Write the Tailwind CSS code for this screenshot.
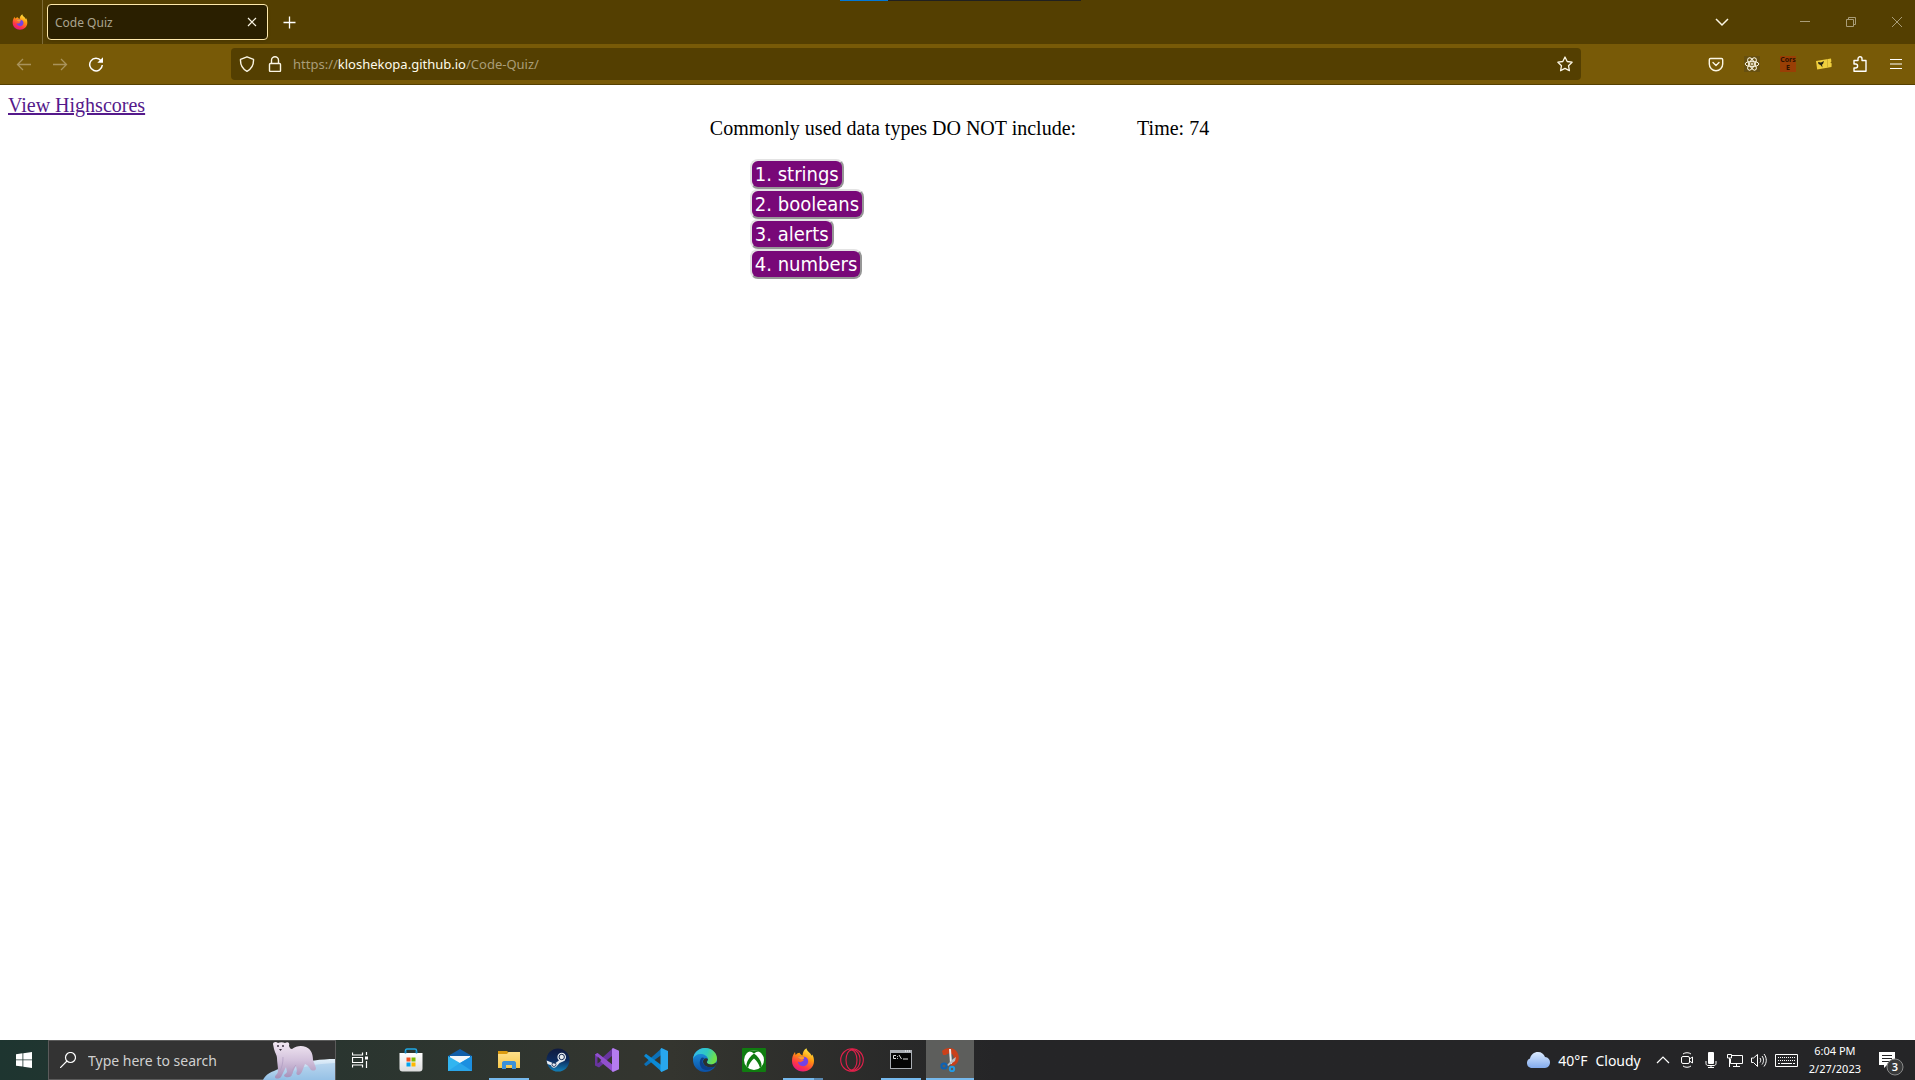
<!DOCTYPE html>
<html lang="en">
<head>
<meta charset="utf-8">
<title>Code Quiz</title>
<script src="https://cdn.jsdelivr.net/npm/@tailwindcss/browser@4"></script>
</head>
<body class="flex h-screen flex-col overflow-hidden bg-white font-['Noto_Sans',sans-serif]">
<svg class="absolute size-0" aria-hidden="true">
  <defs>
    <linearGradient id="fx" x1=".8" y1="0" x2=".3" y2="1"><stop offset="0" stop-color="#fff44f"/><stop offset=".4" stop-color="#ff980e"/><stop offset=".75" stop-color="#ff3647"/><stop offset="1" stop-color="#e31587"/></linearGradient>
    <linearGradient id="edge" x1="0" y1="0" x2="1" y2=".3"><stop offset="0" stop-color="#35b8f1"/><stop offset=".6" stop-color="#2fc9c0"/><stop offset="1" stop-color="#6fe04b"/></linearGradient>
    <linearGradient id="edge2" x1="0" y1="0" x2="0" y2="1"><stop offset="0" stop-color="#1e9be8"/><stop offset="1" stop-color="#0b50a4"/></linearGradient>
    <linearGradient id="steam" x1="0" y1="0" x2="0" y2="1"><stop offset="0" stop-color="#101a3e"/><stop offset=".5" stop-color="#0d2a5c"/><stop offset="1" stop-color="#1280b8"/></linearGradient>
    <linearGradient id="cloud" x1="0" y1="0" x2="0" y2="1"><stop offset="0" stop-color="#dcebff"/><stop offset="1" stop-color="#82aaec"/></linearGradient>
    <linearGradient id="bear" x1="0" y1="0" x2="0" y2="1"><stop offset="0" stop-color="#f3e9f3"/><stop offset=".5" stop-color="#d3c2dc"/><stop offset="1" stop-color="#a58fb8"/></linearGradient>
    <linearGradient id="ice" x1="0" y1="0" x2="0" y2="1"><stop offset="0" stop-color="#e4f0fa"/><stop offset="1" stop-color="#8fbde4"/></linearGradient>
    <linearGradient id="bag" x1="0" y1="0" x2="0" y2="1"><stop offset="0" stop-color="#ffffff"/><stop offset="1" stop-color="#dcdcdc"/></linearGradient>
    <linearGradient id="folder" x1="0" y1="0" x2="0" y2="1"><stop offset="0" stop-color="#ffe08a"/><stop offset="1" stop-color="#f8c84a"/></linearGradient>
    <symbol id="firefox" viewBox="0 0 24 24">
      <path d="M1 13C1 9 2 6.500 4 4l.6 3C6 5.500 7 5 8.500 4.800 9 6 10 7 11.500 7.400c.3-3 1.300-5.500 4-7.100.2 2.700 2.500 3.600 4 5.500.5.700.8 1.300 1 2l.7-1.300C22.500 8.500 23 10.500 23 13c0 6-5 10.500-11 10.500S1 19 1 13z" fill="url(#fx)"/>
      <path d="M7 9.500c2-2 4-1 6-.8 3 .4 4.500 2.500 4.200 5-.4 3-2.700 4.600-5.300 4.500C9 18 7 16 6.800 13.500c1.200 1 2.500 1 3.700.2l2.200-1.200c-.4-1-1.500-1.200-2.700-1.200-1 0-2-.8-3-1.800z" fill="#7542e5"/>
      <path d="M7 9.500c1.500-1.500 3.500-1.300 5-.9 1.300.4 1.600 1.800.7 2.400-1 .6-2.300.4-3 .2-1.100-.3-2-1-2.700-1.700z" fill="#ff9a2a"/>
    </symbol>
  </defs>
</svg>

<header class="shrink-0">
  <div class="relative flex h-11 items-center bg-[#543f01] pr-[10px]">
    <div class="absolute left-[840px] top-0 flex h-px w-[241px] bg-[#202020]"><div class="w-12 bg-[#0078d7]"></div></div>
    <div class="flex h-11 w-[43px] items-center border-r border-[#7e6c38] pl-3"><svg class="size-4"><use href="#firefox"/></svg></div>
    <div class="ml-1 flex h-9 w-[221px] items-center justify-between rounded border border-[#ffe9ab] bg-[#2a1f00] pl-[7px] pr-[7px] shadow">
      <span class="pt-px text-xs text-[#aaa48f]">Code Quiz</span>
      <button aria-label="Close tab" class="text-[#fbf6e4]"><svg class="size-4" viewBox="0 0 16 16" fill="none" stroke="currentColor" stroke-width="1.200"><path d="M4 4l8 8M12 4l-8 8"/></svg></button>
    </div>
    <button aria-label="New tab" class="ml-[13px] text-white"><svg class="size-4" viewBox="0 0 16 16" fill="none" stroke="currentColor" stroke-width="1.300"><path d="M8.500 2.500v12M2.500 8.500h12"/></svg></button>
    <button aria-label="List all tabs" class="ml-auto mr-[67px] text-[#fbf6e4]"><svg class="size-4" viewBox="0 0 16 16" fill="none" stroke="currentColor" stroke-width="1.500"><path d="M2 5l6 6 6-6"/></svg></button>
    <div class="flex gap-[30px] text-[#a99d78]">
      <button aria-label="Minimize"><svg class="size-4" viewBox="0 0 16 16" fill="none" stroke="currentColor"><path d="M3 7.500h10"/></svg></button>
      <button aria-label="Restore"><svg class="size-4" viewBox="0 0 16 16" fill="none" stroke="currentColor"><path d="M3.500 5.500h7v7h-7zM5.500 5.500v-2h7v7h-2"/></svg></button>
      <button aria-label="Close"><svg class="size-4" viewBox="0 0 16 16" fill="none" stroke="currentColor"><path d="M3 3l10 10M13 3L3 13"/></svg></button>
    </div>
  </div>

  <div class="flex h-[41px] items-center border-b border-[#543f01] bg-[#785a07] pl-[6px] pr-px text-[#fbf6e4]">
    <button aria-label="Back" class="flex w-9 justify-center text-[#a9935b]"><svg class="size-4" viewBox="0 0 16 16" fill="none" stroke="currentColor" stroke-width="1.300"><path d="M15 8.500H1.500M7 3L1.500 8.500 7 14"/></svg></button>
    <button aria-label="Forward" class="flex w-9 justify-center text-[#a9935b]"><svg class="size-4" viewBox="0 0 16 16" fill="none" stroke="currentColor" stroke-width="1.300"><path d="M1 8.500h13.500M9 3l5.500 5.500L9 14"/></svg></button>
    <button aria-label="Reload" class="flex w-9 justify-center text-white"><svg class="size-4" viewBox="0 0 16 16" fill="none" stroke="currentColor" stroke-width="1.500"><path d="M13 4.700A6.300 6.300 0 1 0 14.300 9"/><path d="M15 1.200v5.600H9.300z" fill="currentColor" stroke="none"/></svg></button>
    <div class="mx-[117px] flex h-8 flex-1 items-center rounded bg-[#543f01] px-2">
      <svg class="size-4" viewBox="0 0 16 16" fill="none" stroke="currentColor" stroke-width="1.400" stroke-linejoin="round"><path d="M8 .8L14.500 3.300C14.800 9 12.500 13 8 15.300 3.500 13 1.200 9 1.500 3.300z"/></svg>
      <svg class="ml-3 size-4" viewBox="0 0 16 16" fill="none" stroke="currentColor" stroke-width="1.400"><rect x="2.500" y="7.500" width="11" height="8" rx="1"/><path d="M4.500 7.500V4.200a3.500 3.500 0 0 1 7 0v3.300"/></svg>
      <a href="https://kloshekopa.github.io/Code-Quiz/" class="ml-[10px] pt-0.5 text-[13px] text-[#a99d78]">https://<span class="text-[#fffbea]">kloshekopa.github.io</span>/Code-Quiz/</a>
      <button aria-label="Bookmark this page" class="ml-auto"><svg class="size-4" viewBox="0 0 16 16" fill="none" stroke="currentColor" stroke-width="1.300" stroke-linejoin="round"><path d="M8 1l2.200 4.500 4.900.7-3.600 3.500.9 5L8 12.400l-4.400 2.300.9-5L.9 6.200l4.900-.7z"/></svg></button>
    </div>
    <button aria-label="Pocket" class="flex w-9 justify-center"><svg class="size-4" viewBox="0 0 16 16" fill="none" stroke="currentColor" stroke-width="1.400" stroke-linecap="round" stroke-linejoin="round"><path d="M2.500 2.500h11c.7 0 1.200.5 1.200 1.200V8A6.700 6.700 0 0 1 1.300 8V3.700c0-.7.500-1.200 1.200-1.200z"/><path d="M5 6.500l3 3 3-3"/></svg></button>
    <button aria-label="React Developer Tools" class="flex w-9 justify-center"><svg class="size-4 bg-[#675010]" viewBox="0 0 16 16" fill="none" stroke="currentColor" stroke-width="1"><ellipse cx="8" cy="8" rx="6.800" ry="2.700"/><ellipse cx="8" cy="8" rx="6.800" ry="2.700" transform="rotate(60 8 8)"/><ellipse cx="8" cy="8" rx="6.800" ry="2.700" transform="rotate(120 8 8)"/><circle cx="8" cy="8" r="1"/></svg></button>
    <button aria-label="CORS Everywhere" class="flex w-9 justify-center"><span class="flex size-4 flex-col items-center bg-[#993f05] text-[7px] leading-[8px] font-bold text-[#2d1300]"><span>Cors</span><span>E</span></span></button>
    <button aria-label="Ticket extension" class="flex w-9 justify-center"><svg class="size-4" viewBox="0 0 16 16"><path d="M0 5l15-2.500.4 3-1 1 1.300 1-.2 3.500L1.200 13.500z" fill="#f0cf3e"/><path d="M2 6l3 .5L8 5 7 8l-1 .5.500 3L4.500 9 2.500 8z" fill="#272414"/><path d="M11.500 3.500v7.500" stroke="#b69521" stroke-dasharray="1"/></svg></button>
    <button aria-label="Extensions" class="flex w-9 justify-center text-white"><svg class="size-4" viewBox="0 0 16 16" fill="none" stroke="currentColor" stroke-width="1.400" stroke-linejoin="round"><path d="M2 7V4.500h4V2.800a2 2 0 0 1 4 0v1.700h4v10.800H2V12h1.600a2 2 0 0 0 0-4H2z"/></svg></button>
    <button aria-label="Open application menu" class="flex w-9 justify-center text-white"><svg class="size-4" viewBox="0 0 16 16" fill="none" stroke="currentColor" stroke-width="1.200"><path d="M2 3.500h12M2 8h12M2 12.500h12"/></svg></button>
  </div>
</header>

<main class="min-h-0 flex-1 px-2 pt-[9px] font-['Liberation_Serif',serif] text-xl leading-[23px] text-black">
  <a href="#highscores" class="block w-fit text-[#551a8b] underline">View Highscores</a>
  <div class="flex justify-center gap-[61px] pl-1">
    <section>
      <h1>Commonly used data types DO NOT include:</h1>
      <ol class="mt-[19px] flex flex-col items-start pl-10 font-['DejaVu_Sans_Condensed','DejaVu_Sans',sans-serif] text-xl leading-[26px] text-white">
        <li class="flex"><button class="rounded-lg border-2 border-t-[#e3e3e3] border-l-[#e3e3e3] border-r-[#979797] border-b-[#979797] bg-[#780878] px-[3px]">1. strings</button></li>
        <li class="flex"><button class="rounded-lg border-2 border-t-[#e3e3e3] border-l-[#e3e3e3] border-r-[#979797] border-b-[#979797] bg-[#780878] px-[3px]">2. booleans</button></li>
        <li class="flex"><button class="rounded-lg border-2 border-t-[#e3e3e3] border-l-[#e3e3e3] border-r-[#979797] border-b-[#979797] bg-[#780878] px-[3px]">3. alerts</button></li>
        <li class="flex"><button class="rounded-lg border-2 border-t-[#e3e3e3] border-l-[#e3e3e3] border-r-[#979797] border-b-[#979797] bg-[#780878] px-[3px]">4. numbers</button></li>
      </ol>
    </section>
    <p>Time: 74</p>
  </div>
</main>

<footer class="flex h-10 shrink-0 items-stretch bg-linear-to-r from-[#1e3530] via-[#34352f] via-35% to-[#252527] to-52% text-white">
  <button aria-label="Start" class="flex w-12 items-center justify-center"><svg class="size-4" viewBox="0 0 16 16" fill="currentColor"><path d="M0 2.200L6.500 1.300v6.200H0zM7.300 1.200L16 0v7.500H7.300zM0 8.300h6.500v6.300L0 13.700zM7.300 8.300H16V16l-8.700-1.300z"/></svg></button>
  <label class="relative flex w-[288px] items-center border border-[#5b5b5b] bg-[#333333] pl-[11px]">
    <svg class="size-4" viewBox="0 0 16 16" fill="none" stroke="currentColor" stroke-width="1.200"><circle cx="10.500" cy="5.500" r="5"/><path d="M7 9L0 16"/></svg>
    <input type="text" aria-label="Search" placeholder="Type here to search" class="ml-3 w-36 bg-transparent pt-0.5 text-sm text-white outline-none placeholder:text-[#d0d0d0]">
    <svg class="absolute -top-px right-0 h-10 w-[72px]" viewBox="0 0 72 40">
      <path d="M0 40C2 36 5 33 11 31c9-4 12-6 23-6 10-4 24-6 38-6v21z" fill="url(#ice)"/>
      <path d="M26 34c12-8 28-10 46-11v17H22z" fill="#9dc6e8" opacity=".5"/>
      <path d="M10 4c0-2 3-3 5-1 2-1 5-1 7 0 3-2 5 0 4 3 1 2 1 3 3 3 4-3 9-4 14-2 5 2 7 7 7 13l3 8c0 3-3 3-5 2-2-3-3-5-6-6l-2 5c-1 3-2 5-4 6-3 0-3-2-2-4l-1-5c-2 3-3 6-4 8 0 4-6 4-8 2 0-2 2-2 3-4l-1-5-5 10c-2 2-6 2-6 0s3-3 3-6c0-5-1-9-1-13 0-3-2-5-3-9z" fill="url(#bear)"/>
      <path d="M20 17c0 6-1 10-3 14M33 25c-2 2-4 5-4 9" stroke="#b3a0c4" stroke-width=".8" fill="none"/>
      <circle cx="15" cy="6" r="1" fill="#3b3040"/><circle cx="20" cy="6" r="1" fill="#3b3040"/><path d="M16 9h3l-1.500 2z" fill="#3b3040"/>
    </svg>
  </label>
  <nav aria-label="Taskbar" class="flex gap-px">
    <button aria-label="Task View" class="mr-0.5 flex w-12 items-center justify-center"><svg class="size-4" viewBox="0 0 16 16" fill="none" stroke="currentColor" stroke-width="1.200"><path d="M.5.5v2.500h10V.5M.5 15.500V13h10v2.500M.5 5.500h10v5H.5zM14.500 0v3M14.500 9v7"/><path d="M13 4.500h3v3h-3z" fill="currentColor" stroke="none"/></svg></button>
    <button aria-label="Microsoft Store" class="flex w-12 items-center justify-center"><svg class="size-6" viewBox="0 0 24 24"><path d="M6.500 6V2.500C6.500 1.600 7 1 8 1h8c1 0 1.500.6 1.500 1.500V6" fill="none" stroke="#1fa9e6" stroke-width="1.500"/><path d="M.5 5h23v15.500a3 3 0 0 1-3 3h-17a3 3 0 0 1-3-3z" fill="url(#bag)"/><path d="M7.500 9.500h4v4h-4z" fill="#f25022"/><path d="M12.500 9.500h4v4h-4z" fill="#7fba00"/><path d="M7.500 14.500h4v4h-4z" fill="#00a4ef"/><path d="M12.500 14.500h4v4h-4z" fill="#ffb900"/><path d="M6.500 5.500V3M17.500 5.500V3" stroke="#1686c5" stroke-width="1.500"/></svg></button>
    <button aria-label="Mail" class="flex w-12 items-center justify-center"><svg class="size-6" viewBox="0 0 24 24"><path d="M0 8L12 1l12 7v5H0z" fill="#115ea8"/><path d="M2 8h20v5l-10 4-10-4z" fill="#f3f6f9"/><path d="M0 8l12 7 12-7v15H0z" fill="#32b5f0"/><path d="M24 8v15H4l8-8z" fill="#1c8fe0"/><path d="M0 23h24L12 15z" fill="#2aa6ea"/></svg></button>
    <button aria-label="File Explorer" class="relative flex w-12 items-center justify-center"><svg class="size-6" viewBox="0 0 24 24"><path d="M1 3h9l2 2v3H1z" fill="#dc9c11"/><path d="M1 6h9l1.500-2H23v16H1z" fill="url(#folder)"/><path d="M5 21v-6c0-1 .7-2 2-2h10c1.300 0 2 1 2 2v6h-4v-4H9v4z" fill="#3c91d8"/></svg><i class="absolute bottom-0 h-0.5 w-10 bg-[#76b9ed]"></i></button>
    <button aria-label="Steam" class="flex w-12 items-center justify-center"><svg class="size-6" viewBox="0 0 24 24"><circle cx="12" cy="12" r="11.500" fill="url(#steam)"/><path d="M.6 12.500l8 3.300 4-3 3-6 4 2-1 4-5 2.300L10 19c-2 1.500-4.500.5-5-1.700L1.500 16z" fill="#e8edf2"/><circle cx="15.700" cy="9" r="4.300" fill="#e8edf2"/><circle cx="15.700" cy="9" r="2.700" fill="none" stroke="#12264e"/><circle cx="8" cy="16.500" r="2" fill="none" stroke="#12264e" stroke-width=".8"/></svg></button>
    <button aria-label="Visual Studio" class="flex w-12 items-center justify-center"><svg class="size-6" viewBox="0 0 24 24"><path d="M0 6.500l2.500-1.500 5 4.500L18 0v8L4 19.500 0 17.500z" fill="#68349f"/><path d="M3.500 9v6L6.500 12z" fill="#34342f"/><path d="M2.500 5L18 17v7L7 15 0 6.500z" fill="#9150ce"/><path d="M18 0l6 2.800v18.400L18 24l-1-1V1z" fill="#b47cf0"/><path d="M17 8v8l-5-4z" fill="#353530"/><path d="M2.500 8.500v7L6.300 12z" fill="#34342f"/></svg></button>
    <button aria-label="Visual Studio Code" class="flex w-12 items-center justify-center"><svg class="size-6" viewBox="0 0 24 24"><path d="M0 16l2 2.300L18 6.500V0z" fill="#0b70b8"/><path d="M0 8l2-2.300L18 17.500V24z" fill="#0b8ad6"/><path d="M17.500 0L24 3v18l-6.500 3-1-1V1z" fill="#28a7ee"/></svg></button>
    <button aria-label="Microsoft Edge" class="flex w-12 items-center justify-center"><svg class="size-6" viewBox="0 0 24 24"><circle cx="12" cy="12" r="12" fill="url(#edge2)"/><path d="M0 11C1 4 6 0 12 0c7 0 12 5 12 10.500 0 4-3 6-6 6s-5-1-4-2.500c1-1.300 1-2 1-3C14.500 8 11 6 7.500 6 4 6 1 8 0 11z" fill="url(#edge)"/><path d="M9 9.500C6 12 6 17 9 20.500c4 2.500 9 2 12.800-2C16 21 10 18 9.500 13.500c0-1.500 1-2.500 2-3.500z" fill="#0d3f89"/><path d="M15 11c0 1-1 2-1.200 3 0 2 3 2.700 5 2.400 2-.3 3.500-1 4.500-2.400.7 2-.5 3.700-1.500 4.500C17 20.500 11 19 10 14c-.3-2 2-5 5-3z" fill="#2b302f"/></svg></button>
    <button aria-label="Xbox" class="flex w-12 items-center justify-center"><svg class="size-6" viewBox="0 0 24 24"><rect width="24" height="24" rx="1" fill="#107c10"/><circle cx="12" cy="12" r="10" fill="#fff"/><path d="M6 3.800c2-.8 4 .2 6 1.700 2-1.500 4-2.500 6-1.700l-.5-1.500h-11zM9.500 7.500C6 11 4 15 4.500 18.500L6 20c1-4 3.500-7.500 6-9.500 2.500 2 5 5.500 6 9.500l1.500-1.500C20 15 18 11 14.500 7.500L12 5.500z" fill="#107c10"/></svg></button>
    <button aria-label="Firefox" class="relative flex w-12 items-center justify-center"><svg class="size-6"><use href="#firefox"/></svg><i class="absolute bottom-0 left-1 flex h-0.5 w-10 bg-[#5888b0]"><b class="w-[31px] bg-[#76b9ed]"></b></i></button>
    <button aria-label="Opera" class="flex w-12 items-center justify-center"><svg class="size-6" viewBox="0 0 24 24" fill="none" stroke="#e2204b" stroke-width="1.100"><circle cx="12" cy="12" r="11.300"/><ellipse cx="11.500" cy="12" rx="5.500" ry="10"/><path d="M10 2c4-2 10 2 10 10s-6 12-10 10"/></svg></button>
    <button aria-label="Command Prompt" class="relative flex w-12 items-center justify-center"><svg class="size-6" viewBox="0 0 24 24"><path d="M1 2h22v19H1z" fill="#a9adb3"/><path d="M2 5h20v15H2z" fill="#050505"/><path d="M16 3h1M18 3h1M20 3h1" stroke="#fff"/><path d="M7 7.500H4.500v3H7M8.500 8v.8M8.500 10v.8M10 7l2.500 4M14 11h5" fill="none" stroke="#ddd"/></svg><i class="absolute bottom-0 h-0.5 w-10 bg-[#76b9ed]"></i></button>
    <button aria-label="Snipping Tool" class="relative flex w-12 items-center justify-center bg-[#5d5e5c]"><svg class="size-6" viewBox="0 0 24 24"><path d="M4 3c4-4 12-4 15 1 4 6 1 14-6 14l-1-4c4 0 5-4 3-7-2-2-5-2-7 0H5z" fill="#c9401a"/><path d="M11 1l2 0 1 15h-2z" fill="#e9edf0"/><path d="M18 9l-3 2-6 6 1 1 7-5z" fill="#b8bec4"/><circle cx="6" cy="18" r="2.600" fill="none" stroke="#0c62b5" stroke-width="2"/><circle cx="14" cy="21" r="2.200" fill="none" stroke="#229be6" stroke-width="2"/></svg><i class="absolute bottom-0 h-0.5 w-full bg-[#76b9ed]"></i></button>
  </nav>
  <div class="ml-auto flex items-center pr-3">
    <button class="mr-[14px] flex items-center text-sm"><svg class="mr-2 h-4 w-6" viewBox="0 0 24 16"><path d="M5 16a5 5 0 0 1-1-9.500C5 2.500 8 0 12 0c3.500 0 6 2 7 5 3 .2 5 2.500 5 5.300C24 13.500 22 16 19 16z" fill="url(#cloud)"/></svg><span class="mr-2 pt-0.5">40°F</span><span class="pt-0.5">Cloudy</span></button>
    <button aria-label="Show hidden icons" class="mr-2"><svg class="size-4" viewBox="0 0 16 16" fill="none" stroke="currentColor" stroke-width="1.200"><path d="M2 11l6-6 6 6"/></svg></button>
    <button aria-label="Meet Now" class="mr-2"><svg class="size-4" viewBox="0 0 16 16" fill="none" stroke="currentColor"><rect x="2.500" y="4.500" width="8" height="7" rx="1.500"/><path d="M10.500 7l3-2v6l-3-2M4 2C6 .3 10 .3 12 2M4 14c2 1.700 6 1.700 8 0"/></svg></button>
    <button aria-label="Microphone" class="mr-2"><svg class="size-4" viewBox="0 0 16 16" fill="none" stroke="currentColor"><rect x="5" y="0" width="6" height="12" rx="1" fill="currentColor" stroke="none"/><path d="M3 9v2.500c0 1.300 1 2 2 2h6c1 0 2-.7 2-2V9M8 13v2.500M5 15.500h6"/></svg></button>
    <button aria-label="Network" class="mr-2"><svg class="size-4" viewBox="0 0 16 16" fill="none" stroke="currentColor"><path d="M5 3.500h10.500v8H3.500V7M9.500 11.500v3M6 14.500h7M.5 2.500h4V6h-4zM2.500 6v9"/></svg></button>
    <button aria-label="Volume" class="mr-2"><svg class="size-4" viewBox="0 0 16 16" fill="none" stroke="currentColor"><path d="M.5 6v4.500h2l4 4v-12l-4 3.500zM9 6c1 1.500 1 3 0 4.500M11 4c2 2.500 2 6 0 8.500M13 2c3 4 3 8.500 0 12.500"/></svg></button>
    <button aria-label="Touch keyboard" class="mr-[10px]"><svg class="h-4 w-6" viewBox="0 0 24 16" fill="none" stroke="currentColor"><path d="M.5 2.500h22v12H.5z"/><path d="M3 5.500h18M3 8.500h18" stroke-dasharray="1 1"/><path d="M3 11.500h2M6 11.500h11M18 11.500h2"/></svg></button>
    <time datetime="2023-02-27T18:04" class="mr-[18px] text-center text-[11px] leading-[18px]"><span class="block">6:04 PM</span><span class="block">2/27/2023</span></time>
    <button aria-label="3 notifications" class="relative"><svg class="h-6 w-6 overflow-visible" viewBox="0 0 24 24"><path d="M0 4h16v13H8l-3 3v-3H0z" fill="#fff"/><path d="M3 7.500h10M3 10.500h10M3 13.500h7" stroke="#252527"/><circle cx="16" cy="19" r="8" fill="#38393a" stroke="#8a8a8a"/></svg><span class="absolute top-[11px] left-0 w-8 text-center text-[11px] leading-4 font-semibold">3</span></button>
  </div>
</footer>
</body>
</html>
